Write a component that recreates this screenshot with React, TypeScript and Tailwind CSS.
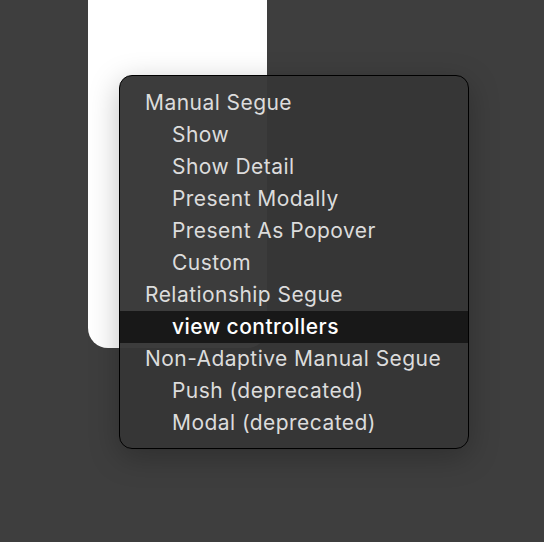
import React from "react";

const items: { label: string; header?: boolean; selected?: boolean }[] = [
  { label: "Manual Segue", header: true },
  { label: "Show" },
  { label: "Show Detail" },
  { label: "Present Modally" },
  { label: "Present As Popover" },
  { label: "Custom" },
  { label: "Relationship Segue", header: true },
  { label: "view controllers", selected: true },
  { label: "Non-Adaptive Manual Segue", header: true },
  { label: "Push (deprecated)" },
  { label: "Modal (deprecated)" },
];

export default function App() {
  return (
    <div
      className="relative w-[544px] h-[542px] bg-[#3e3e3e] overflow-hidden"
      style={{ fontFamily: "Inter, 'Noto Sans', sans-serif" }}
    >
      <div className="ml-[88px] w-[179px] h-[348px] bg-white rounded-b-[20px]" />
      <div className="absolute left-[119px] top-[75px] w-[350px] rounded-[13px] border border-black bg-[rgba(54,54,54,0.97)] pt-[11px] pb-[9px] shadow-[0_8px_30px_rgba(0,0,0,0.25)]">
        {items.map((it) => (
          <div
            key={it.label}
            className={
              "h-[32px] flex items-center text-[21px] tracking-[0.45px] " +
              (it.header ? "pl-[25px] " : "pl-[52px] ") +
              (it.selected ? "bg-[#181818] text-white font-medium" : "text-[#dcdcdc]")
            }
          >
            {it.label}
          </div>
        ))}
      </div>
    </div>
  );
}
